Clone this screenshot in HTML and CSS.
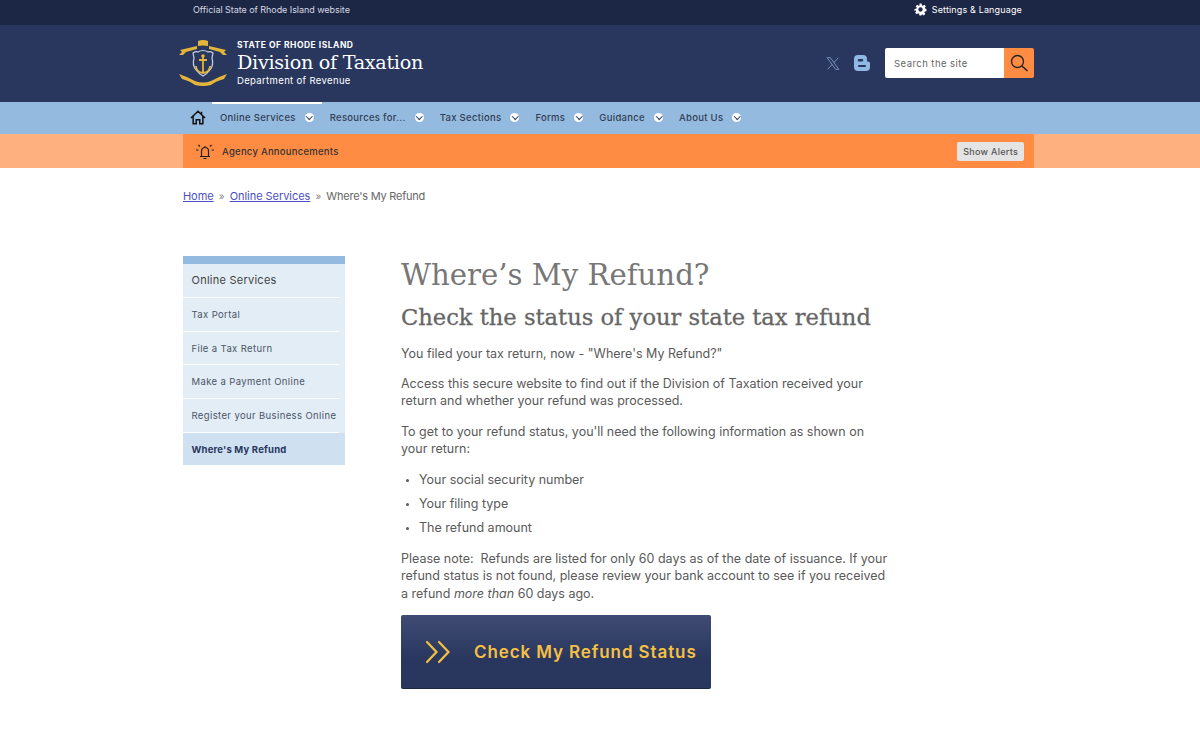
FILE: index.html
```html
<!DOCTYPE html>
<html lang="en">
<head>
  <meta charset="UTF-8" />
  <title>Where's My Refund | Division of Taxation</title>
  <link rel="stylesheet" href="styles.css">
</head>
<body>

<div class="top-bar">
  <div class="wrap top-inner">
    <span class="official">Official State of Rhode Island website</span>
    <span class="settings">
      <svg width="13" height="13" viewBox="0 0 24 24"><path fill="#fff" fill-rule="evenodd" d="M10 1h4l.6 3.1 1.900.8 2.600-1.800 2.800 2.800-1.800 2.600.8 1.900L23 11v4l-3.100.6-.8 1.900 1.800 2.600-2.800 2.800-2.600-1.800-1.900.8L14 23h-4l-.6-3.100-1.900-.8-2.600 1.800-2.800-2.800 1.800-2.600-.8-1.900L1 15v-4l3.100-.6.8-1.900-1.800-2.600 2.800-2.800 2.600 1.800 1.900-.8zM12 8a4 4 0 1 0 0 8 4 4 0 0 0 0-8z"/></svg>
      Settings &amp; Language
    </span>
  </div>
</div>

<header class="site-header">
  <div class="wrap header-inner">
    <div class="brand">
      <svg class="seal" width="50" height="49" viewBox="0 0 50 49">
        <path fill="#e3b53a" d="M1 16l3-3-2-2 17-4v3L8 13l-3 3zM49 16l-3-3 2-2-17-4v3l11 3 3 3z"/>
        <path fill="#e3b53a" d="M20 2q5-2 10 0v5q-5-1-10 0z"/>
        <path fill="#29375e" stroke="#c9d3e6" stroke-width="1.200" d="M15 14q3-2 5-1 5-3 10 0 2-1 5 1l-1 5q2 7-2 12-3 4-7 6-4-2-7-6-4-5-2-12z"/>
        <path fill="none" stroke="#e3b53a" stroke-width="1.800" d="M25 18v16M21 21h8M18 27q0 6 7 7 7-1 7-7"/>
        <circle cx="25" cy="17" r="1.800" fill="#e3b53a"/>
        <path fill="#e3b53a" d="M1 35q9 3 16 7 8 3 16 0 7-4 16-7l-3 5q-8 2-13 6-8 2-16 0-5-4-13-6z"/>
      </svg>
      <div class="brand-text">
        <div class="brand-state">STATE OF RHODE ISLAND</div>
        <div class="brand-name">Division of Taxation</div>
        <div class="brand-dept">Department of Revenue</div>
      </div>
    </div>
    <div class="header-tools">
      <svg class="x-icon" width="14" height="15" viewBox="0 0 24 24"><path fill="none" stroke="#7f9cc4" stroke-width="1.500" d="M2 2h5.500L22 22h-5.500zM21 2L13.500 10.500M10.500 13.500L3 22"/></svg>
      <svg class="blog-icon" width="16" height="16" viewBox="0 0 16 16"><path fill="#8fb8e2" fill-rule="evenodd" d="M4 0h5a4 4 0 0 1 4 4v2.500h1.200c1 0 1.800.7 1.800 1.800V12a4 4 0 0 1-4 4H4a4 4 0 0 1-4-4V4a4 4 0 0 1 4-4zM5 4a1 1 0 0 0 0 2.500h3A1 1 0 0 0 8 4zm0 6a1 1 0 0 0 0 2h6a1 1 0 0 0 0-2z"/></svg>
      <form class="search">
        <input class="search-input" type="text" placeholder="Search the site">
        <button class="search-btn" type="button">
          <svg width="20" height="20" viewBox="0 0 20 20"><circle cx="8.500" cy="8.500" r="6" fill="none" stroke="#222" stroke-width="1.300"/><path stroke="#222" stroke-width="1.600" d="M13 13l5.500 5"/></svg>
        </button>
      </form>
    </div>
  </div>
</header>

<nav class="main-nav">
  <div class="wrap nav-inner">
    <a class="nav-home">
      <svg width="16" height="15" viewBox="0 0 18 17"><path fill="none" stroke="#111" stroke-width="1.700" d="M1 9l8-7.500L17 9M3.500 7v8.500h3.500V11h4v4.500h3.500V7M13 2v3"/></svg>
    </a>
    <a class="nav-item active">Online Services <i class="chev"></i></a>
    <a class="nav-item">Resources for... <i class="chev"></i></a>
    <a class="nav-item">Tax Sections <i class="chev"></i></a>
    <a class="nav-item">Forms <i class="chev"></i></a>
    <a class="nav-item">Guidance <i class="chev"></i></a>
    <a class="nav-item">About Us <i class="chev"></i></a>
  </div>
</nav>

<div class="alert-band">
  <div class="wrap alert-inner">
    <div class="alert-label">
      <svg width="20" height="17" viewBox="0 0 20 17"><path fill="none" stroke="#222" stroke-width="1.200" d="M5 13.500h10M6.500 13.500V8a3.500 3.500 0 0 1 7 0v5.500M10 3v1.500M8.500 15.500h3M1 7h2.500M16.500 7H19M3.500 2l1.500 1.500M16.500 2L15 3.500"/></svg>
      Agency Announcements
    </div>
    <button class="alert-btn" type="button">Show Alerts</button>
  </div>
</div>

<div class="wrap breadcrumb">
  <a href="#">Home</a> <span class="sep">»</span> <a href="#">Online Services</a> <span class="sep">»</span> <span class="crumb-current">Where's My Refund</span>
</div>

<div class="wrap page">
  <aside class="side-nav">
    <div class="side-title">Online Services</div>
    <a class="side-link">Tax Portal</a>
    <a class="side-link">File a Tax Return</a>
    <a class="side-link">Make a Payment Online</a>
    <a class="side-link">Register your Business Online</a>
    <a class="side-link current">Where's My Refund</a>
  </aside>

  <main class="content">
    <h1>Where’s My Refund?</h1>
    <h2>Check the status of your state tax refund</h2>
    <p>You filed your tax return, now - "Where's My Refund?"</p>
    <p>Access this secure website to find out if the Division of Taxation received your return and whether your refund was processed.</p>
    <p>To get to your refund status, you'll need the following information as shown on your return:</p>
    <ul>
      <li>Your social security number</li>
      <li>Your filing type</li>
      <li>The refund amount</li>
    </ul>
    <p>Please note:&nbsp; Refunds are listed for only 60 days as of the date of issuance. If your refund status is not found, please review your bank account to see if you received a refund <em>more than</em> 60 days ago.</p>
    <a class="cta">
      <svg width="26" height="24" viewBox="0 0 26 24"><path fill="none" stroke="#f5c044" stroke-width="2.200" stroke-linecap="round" d="M2 2l9.500 10L2 22M14 2l9.500 10L14 22"/></svg>
      <span>Check My Refund Status</span>
    </a>
  </main>
</div>

</body>
</html>
```

FILE: styles.css
```css
* {
  box-sizing: border-box;
}

body {
  margin: 0;
  background: #fff;
  color: #5a5a5a;
  font-family: 'Inter', 'Open Sans', sans-serif;
  font-size: 13px;
}

.wrap {
  width: 851px;
  margin-left: 183px;
}

/* top strip */
.top-bar {
  height: 25px;
  background: #1c2645;
  color: #d5d9e2;
  font-size: 9px;
}

.top-inner {
  display: flex;
  justify-content: space-between;
  align-items: center;
  height: 19px;
  padding: 0 12px 0 10px;
}

.official {
  letter-spacing: -0.05px;
}

.settings {
  display: flex;
  align-items: center;
  gap: 5px;
  color: #fff;
  letter-spacing: 0.15px;
}

/* header */
.site-header {
  height: 77px;
  padding-bottom: 1px;
  background: #29375e;
}

.header-inner {
  display: flex;
  justify-content: space-between;
  align-items: center;
  height: 100%;
}

.brand {
  display: flex;
  align-items: center;
  gap: 9px;
  margin-left: -5px;
}

.brand-text {
  color: #fff;
}

.brand-state {
  font-size: 8.500px;
  font-weight: 700;
  letter-spacing: 0.5px;
}

.brand-name {
  font-family: 'DejaVu Serif', serif;
  font-size: 19.200px;
  line-height: 25px;
  font-weight: 400;
  letter-spacing: -0.3px;
}

.brand-dept {
  font-size: 9.500px;
  letter-spacing: 0.35px;
}

.header-tools {
  display: flex;
  align-items: center;
}

.x-icon {
  margin-right: 14px;
}

.blog-icon {
  margin-right: 15px;
}

.search {
  display: flex;
  height: 30px;
}

.search-input {
  width: 119px;
  height: 30px;
  padding: 0 9px;
  border: none;
  border-radius: 2px 0 0 2px;
  background: #fff;
  font-family: inherit;
  font-size: 9.500px;
  letter-spacing: 0.45px;
}

.search-input::placeholder {
  color: #666;
}

.search-btn {
  display: flex;
  align-items: center;
  justify-content: center;
  width: 30px;
  padding: 0;
  border: none;
  border-radius: 0 2px 2px 0;
  background: #ff8c42;
}

/* nav */
.main-nav {
  height: 32px;
  background: #94bbdf;
}

.nav-inner {
  display: flex;
  align-items: center;
  height: 32px;
}

.nav-home {
  display: flex;
  width: 29px;
  padding: 0 0 2px 7px;
}

.nav-item {
  display: flex;
  align-items: center;
  height: 32px;
  padding: 0 8px 2px;
  color: #333d55;
  font-size: 9.500px;
  font-weight: 500;
  letter-spacing: 0.3px;
  white-space: nowrap;
}

.nav-item.active {
  border-top: 2px solid #fff;
  padding-bottom: 4px;
}

.chev {
  position: relative;
  display: inline-block;
  width: 9px;
  height: 9px;
  margin-left: 9px;
  border-radius: 50%;
  background: #fff;
}

.chev::after {
  content: "";
  position: absolute;
  left: 2.800px;
  top: 1.800px;
  width: 3.500px;
  height: 3.500px;
  border-right: 1.300px solid #29375e;
  border-bottom: 1.300px solid #29375e;
  transform: rotate(45deg);
}

/* alert */
.alert-band {
  height: 34px;
  background: #ffb07f;
}

.alert-inner {
  display: flex;
  justify-content: space-between;
  align-items: center;
  height: 34px;
  padding: 0 10px 0 12px;
  background: #ff8c42;
}

.alert-label {
  display: flex;
  align-items: center;
  gap: 7px;
  color: #333;
  font-size: 9.500px;
  font-weight: 500;
  letter-spacing: 0.25px;
}

.alert-btn {
  height: 19px;
  padding: 0 6px;
  border: none;
  border-radius: 2px;
  background: #e4e4e4;
  color: #555;
  font-family: inherit;
  font-size: 9px;
  font-weight: 500;
  letter-spacing: 0.27px;
}

/* breadcrumb */
.breadcrumb {
  margin-top: 20px;
  font-size: 11px;
  line-height: 16px;
  color: #666;
}

.breadcrumb a {
  color: #4a4fc4;
  text-decoration: underline;
  letter-spacing: -0.05px;
}

.sep {
  margin: 0 2px;
  color: #888;
  font-size: 10px;
}

.crumb-current {
  letter-spacing: -0.22px;
}

/* page columns */
.page {
  display: flex;
  gap: 56px;
  margin-top: 52px;
}

.side-nav {
  align-self: flex-start;
  width: 162px;
  flex: none;
  border-top: 8px solid #94bbdf;
  background: #e2edf6;
}

.side-title {
  margin: 0 6px 0 0;
  padding: 9px 0 9px 8.500px;
  color: #444;
  font-size: 11px;
  line-height: 15px;
  letter-spacing: 0.25px;
  border-bottom: 1px solid #fff;
}

.side-link {
  display: block;
  margin-right: 6px;
  padding: 11px 0 9px 8.500px;
  color: #4c5566;
  font-size: 9.500px;
  line-height: 12.700px;
  letter-spacing: 0.38px;
  border-bottom: 1px solid #fff;
  white-space: nowrap;
}

.side-link.current {
  margin-right: 0;
  padding-bottom: 8px;
  border-bottom: none;
  background: #cfe0f1;
  color: #29375e;
  font-weight: 700;
  letter-spacing: 0.2px;
}

.content {
  width: 490px;
  flex: none;
}

h1 {
  margin: 0;
  padding-top: 1px;
  color: #777;
  font-family: 'DejaVu Serif', serif;
  font-size: 29.200px;
  line-height: 36px;
  font-weight: 400;
}

h2 {
  margin: 9px 0 0;
  color: #666;
  font-family: 'DejaVu Serif', serif;
  font-size: 22.600px;
  line-height: 30px;
  font-weight: 400;
  -webkit-text-stroke: 0.3px #666;
  white-space: nowrap;
}

p {
  margin: 12.500px 0 0;
  font-size: 12.500px;
  line-height: 17.700px;
}

ul {
  margin: 12.500px 0 13.300px;
  padding-left: 18px;
  font-size: 12.500px;
}

li {
  line-height: 17.700px;
  margin-bottom: 6.300px;
}

li::marker {
  font-size: 9px;
}

.cta {
  display: flex;
  align-items: center;
  gap: 23px;
  width: 310px;
  height: 74px;
  margin-top: 12.500px;
  padding-left: 24px;
  border-radius: 2px;
  background: linear-gradient(#3f4b72, #29375e 60%);
  border-bottom: 1px solid #1c2645;
  color: #f5c044;
  font-size: 17px;
  font-weight: 600;
  letter-spacing: 0.9px;
}
```
